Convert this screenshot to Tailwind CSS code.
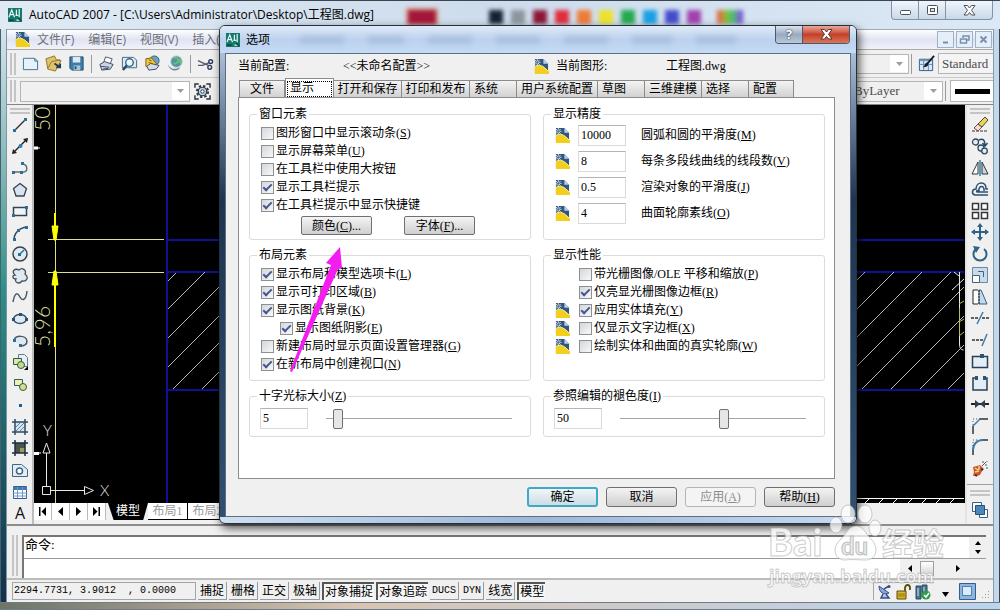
<!DOCTYPE html>
<html lang="zh-CN">
<head>
    <meta charset="UTF-8">
    <meta name="viewport" content="width=device-width, initial-scale=1.0">
    <title>AutoCAD 2007 - 选项</title>
    <!-- Tailwind CSS -->
    <script src="https://cdn.jsdelivr.net/npm/@tailwindcss/browser@4"></script>
    <style>
        body { font-family: 'Liberation Serif', 'Noto Sans CJK SC', serif; }
        .ui { font-family: 'Open Sans', 'Noto Sans CJK SC', sans-serif; }
        .mono { font-family: 'Liberation Mono', 'Noto Sans CJK SC', monospace; }
    </style>
</head>
<body class="h-screen overflow-hidden relative text-[12px] text-black">

    <!-- Símbolos compartilhados -->
    <svg class="hidden">
        <symbol id="dwg" viewBox="0 0 16 16">
            <path d="M1 0h9l5 5v10H1z" fill="#31567f"/>
            <path d="M10 0l5 5h-5z" fill="#b9d0e6"/>
            <path d="M1 8c4-3 9-1 15 5v3H1z" fill="#f3cf1d"/>
            <path d="M1 8c4-3 9-1 14 5" fill="none" stroke="#fff3a0"/>
            <path d="M3.500 0v7M0 3.500h7M1 1l5 5M6 1L1 6" stroke="#fff" stroke-width=".8"/>
            <path d="M3.500 2v3M2 3.500h3" stroke="#31567f" stroke-width=".8"/>
        </symbol>
        <symbol id="acad" viewBox="0 0 15 15">
            <path d="M0 0h15v15H0z" fill="#15786b"/>
            <path d="M1 10L4 2l3 8M2 7h4M9 2v6M12 1v9M8 8h3M9 13h4" stroke="#e4f7f2" stroke-width="1.300" fill="none"/>
            <path d="M1 13h5M11 11l3 3" stroke="#0a3b35" stroke-width="1.500"/>
        </symbol>
    </svg>

    <!-- Janela principal -->
    <div class="h-full flex flex-col border-t border-[#3c4450] bg-linear-to-r from-[#cfe0f2] via-[#d9e5f2] to-[#c5d9ee]">

        <header class="ui h-[28px] shrink-0 flex items-center pl-[8px] bg-linear-to-r from-[#dfeaf4] via-[#cddcec] to-[#dbe9f6]">
            <svg class="w-[14px] h-[14px]"><use href="#acad"/></svg>
            <h1 class="w-[384px] pl-[7px] text-[12px] whitespace-nowrap">AutoCAD 2007 - [C:\Users\Administrator\Desktop\工程图.dwg]</h1>
            <div class="flex items-center gap-[8px] pt-[3px] blur-[2px]">
                <span class="w-[32px] h-[18px] mr-[43px] bg-[#a3173a] border-2 border-[#dd9c7c]"></span>
                <span class="w-[14px] h-[14px] bg-[#152233]"></span>
                <span class="w-[14px] h-[14px] bg-[#8d959d]"></span>
                <span class="w-[14px] h-[14px] bg-[#8b1638]"></span>
                <span class="w-[14px] h-[14px] bg-[#e02c3c]"></span>
                <span class="w-[14px] h-[14px] bg-[#ee7b34]"></span>
                <span class="w-[14px] h-[14px] bg-[#ece229]"></span>
                <span class="w-[14px] h-[14px] bg-[#24a94f]"></span>
                <span class="w-[14px] h-[14px] bg-[#1a9fe3]"></span>
                <span class="w-[14px] h-[14px] bg-[#444bcb]"></span>
                <span class="w-[14px] h-[14px] bg-[#a142ae]"></span>
                <span class="w-[26px] h-[14px] ml-[8px] bg-linear-to-r from-[#e8503c] via-[#3fd045] to-[#7a30e0]"></span>
            </div>
            <div class="ml-auto mr-[7px] h-[19px] self-start flex rounded-b-[4px] border border-t-0 border-[#8593a5] bg-linear-to-b from-[#f0f6fc] to-[#c9d9ea]">
                <button class="w-[27px] grid place-content-center border-r border-[#8593a5]" aria-label="最小化">
                    <svg class="w-[13px] h-[11px]" viewBox="0 0 13 11"><rect x="1.500" y="5.500" width="10" height="4" rx="1" fill="#fff" stroke="#4b5159"/></svg>
                </button>
                <button class="w-[27px] grid place-content-center border-r border-[#8593a5]" aria-label="最大化">
                    <svg class="w-[13px] h-[11px]" viewBox="0 0 13 11"><rect x="1.500" y=".5" width="10" height="9" rx="1" fill="#fff" stroke="#4b5159"/><rect x="4.500" y="3.500" width="4" height="3" fill="#dde8f2" stroke="#4b5159"/></svg>
                </button>
                <button class="w-[46px] grid place-content-center" aria-label="关闭">
                    <svg class="w-[13px] h-[11px]" viewBox="0 0 13 11"><path d="M1 .5h3.500l2 2.500 2-2.500H12L8.500 5.300 12 10H8.500l-2-2.500-2 2.500H1l3.500-4.700z" fill="#fff" stroke="#4b5159"/></svg>
                </button>
            </div>
        </header>

        <div class="flex-1 min-h-0 flex">
            <div class="w-[7px] shrink-0 border-l border-r border-l-[#47606e] border-r-[#7f95a0] bg-linear-to-b from-[#d5e4f0] via-[#2b9288] via-45% to-[#15304a]"></div>

            <div class="flex-1 min-w-0 flex flex-col bg-[#f0f0f0]">

                <nav class="ui h-[20px] shrink-0 flex items-center pl-[8px] text-[12px] text-[#6d6f78] border-t border-[#9fa8b3] bg-linear-to-b from-white via-[#e0e4f2] to-[#f1f2fa]">
                    <svg class="w-[15px] h-[15px] mr-[7px]"><use href="#dwg"/></svg>
                    <div class="flex gap-[14px]">
                        <a href="#">文件(F)</a>
                        <a href="#">编辑(E)</a>
                        <a href="#">视图(V)</a>
                        <a href="#">插入(I)</a>
                    </div>
                    <div class="ml-auto flex gap-[2px] pr-px">
                        <button class="w-[17px] h-[17px] grid place-content-center border border-[#9db3ca] bg-[#e6eff8]" aria-label="最小化图形"><svg class="w-[11px] h-[11px]" viewBox="0 0 11 11"><path d="M3 8.500h5" stroke="#7890ad" stroke-width="2"/></svg></button>
                        <button class="w-[17px] h-[17px] grid place-content-center border border-[#9db3ca] bg-[#e6eff8]" aria-label="还原图形"><svg class="w-[11px] h-[11px]" viewBox="0 0 11 11"><path d="M4 4V2h6v4H8M1.500 5h6v4h-6z" fill="none" stroke="#7890ad" stroke-width="1.500"/></svg></button>
                        <button class="w-[17px] h-[17px] grid place-content-center border border-[#9db3ca] bg-[#e6eff8]" aria-label="关闭图形"><svg class="w-[11px] h-[11px]" viewBox="0 0 11 11"><path d="M2.500 2.500l6 6M8.500 2.500l-6 6" stroke="#7890ad" stroke-width="2"/></svg></button>
                    </div>
                </nav>

                <!-- Barra padrão -->
                <div class="h-[28px] shrink-0 flex items-center pl-[3px] border-t border-[#a9a9a9]">
                    <span class="w-[6px] h-[22px] mr-[6px] border-x-2 border-[#c4c4c4]"></span>
                    <svg class="w-[17px] h-[17px] mr-[6px]" viewBox="0 0 18 18"><path d="M1.500 3.500h12l3 3v9h-15z" fill="#e5f2fb" stroke="#3f7191"/><path d="M13.500 3.500v3h3" fill="none" stroke="#3f7191"/></svg>
                    <svg class="w-[17px] h-[17px] mr-[6px]" viewBox="0 0 18 18"><path d="M1 4l9-3 2 4 5 1-6 11-8-2z" fill="#dfc36a" stroke="#8f7431"/><path d="M3 14l4-7 9-2" fill="none" stroke="#8f7431"/><path d="M10 9l6 4M16 9v4h-4" stroke="#25394e" stroke-width="2" fill="none"/></svg>
                    <svg class="w-[17px] h-[17px] mr-[6px]" viewBox="0 0 18 18"><path d="M2 2h14v14H4l-2-2z" fill="#3e7ba8" stroke="#22506f"/><path d="M5 2h8v6H5z" fill="#d9eaf5"/><path d="M6 11h7v5H6z" fill="#a8c6da"/><path d="M8 12v3" stroke="#22506f" stroke-width="2"/></svg>
                    <span class="w-px h-[18px] mr-[6px] bg-[#9a9a9a]"></span>
                    <svg class="w-[17px] h-[17px] mr-[6px]" viewBox="0 0 18 18"><path d="M6 8l2-6 7 2-2 5" fill="#fff" stroke="#49546b"/><path d="M2 10l5-3 9 3-3 5-9 1z" fill="#ccd3e2" stroke="#39455f"/><path d="M3 12l9 1M5 15l6-1" stroke="#39455f"/></svg>
                    <svg class="w-[17px] h-[17px] mr-[6px]" viewBox="0 0 18 18"><path d="M1.500 2.500h12l3 3v8h-15z" fill="#dcecf6" stroke="#3d6888"/><circle cx="9" cy="8" r="4" fill="#f1f8fc" stroke="#3d6888" stroke-width="1.500"/><path d="M6 11l-4 5" stroke="#27455f" stroke-width="2.500"/></svg>
                    <svg class="w-[17px] h-[17px] mr-[6px]" viewBox="0 0 18 18"><circle cx="11" cy="6" r="5" fill="#6ba1bf" stroke="#325f7c"/><path d="M2 4l6-1 5 6-4 5-7-2z" fill="#f0c93a" stroke="#786019"/><path d="M3 12l4-3 9 2-3 4-8 1z" fill="#d6dbe6" stroke="#404a60"/><path d="M5 5l3 1M5 8l4 1" stroke="#786019"/></svg>
                    <svg class="w-[17px] h-[17px] mr-[6px]" viewBox="0 0 18 18"><circle cx="10" cy="7" r="6" fill="#4f94a8" stroke="#b6c8ce"/><path d="M7 3c3 0 5 0 5 3s-4 2-5 4M14 4c-1 3 0 4 1 5" stroke="#6dbd7a" stroke-width="2" fill="none"/><path d="M1 10c3 5 7 6 13 3-2 5-11 5-13-3z" fill="#7b858d"/></svg>
                    <span class="w-px h-[18px] mr-[6px] bg-[#9a9a9a]"></span>
                    <svg class="w-[17px] h-[17px]" viewBox="0 0 18 18"><path d="M1 6l11 5M1 11h5l7-3" stroke="#545b6d" stroke-width="1.500" fill="none"/><circle cx="14.500" cy="7" r="2" fill="none" stroke="#2e3a62" stroke-width="1.500"/><circle cx="13.500" cy="13" r="2" fill="none" stroke="#2e3a62" stroke-width="1.500"/></svg>
                    <div class="ml-auto flex items-center">
                        <button class="w-[100px] h-[20px] flex items-center justify-end border border-[#b5b5b5] bg-[#f0f0f0]" aria-label="标注样式列表"><span class="w-[18px] h-[17px] grid place-content-center bg-white"><svg class="w-[7px] h-[4px]" viewBox="0 0 7 4"><path d="M0 0h7L3.500 4z" fill="#9d9d9d"/></svg></span></button>
                        <span class="w-[3px] h-[20px] mr-[3px] border-r border-[#9a9a9a]"></span>
                        <svg class="w-[17px] h-[17px] mx-[3px]" viewBox="0 0 18 18"><path d="M1.500 4.500h14v12h-14z" fill="#dbe9f6" stroke="#31598b"/><path d="M1 6h14M1 10h14M6 5v11M11 5v11" stroke="#5f87bd"/><path d="M17 1l-7 8" stroke="#1c1c28" stroke-width="2"/><path d="M10 8c-3 0-2 3-5 5 4 0 6-1 6-4z" fill="#1c1c28"/></svg>
                        <button class="w-[55px] h-[21px] pl-[3px] text-left text-[13px] leading-[17px] text-[#4c4c4c] border border-r-0 border-[#b5b5b5] bg-[#f4f4f4]">Standard</button>
                    </div>
                </div>

                <!-- Barra de propriedades -->
                <div class="h-[27px] shrink-0 flex items-center pl-[3px] border-t border-[#c9c9c9]">
                    <span class="w-[6px] h-[22px] mr-[4px] border-x-2 border-[#c4c4c4]"></span>
                    <button class="w-[170px] h-[21px] flex items-center justify-end border border-[#b5b5b5] bg-[#f0f0f0]" aria-label="工作空间"><span class="w-[17px] h-[18px] grid place-content-center bg-white"><svg class="w-[7px] h-[4px]" viewBox="0 0 7 4"><path d="M0 0h7L3.500 4z" fill="#9d9d9d"/></svg></span></button>
                    <svg class="w-[17px] h-[17px] ml-[4px]" viewBox="0 0 18 18"><path d="M1 5V1h4M13 1h4v4M17 13v4h-4M5 17H1v-4" fill="none" stroke="#28323c" stroke-width="1.500"/><circle cx="9" cy="9" r="6" fill="none" stroke="#2a3945" stroke-width="2" stroke-dasharray="2.500 2.200"/><circle cx="9" cy="9" r="4.500" fill="#c3d2df" stroke="#2a3945" stroke-width="1.300"/><circle cx="9" cy="9" r="1.800" fill="#fff" stroke="#2a3945"/></svg>
                    <div class="ml-auto flex items-center">
                        <button class="w-[100px] h-[21px] pl-[10px] flex items-center justify-between text-[13px] text-[#4c4c4c] border border-[#b5b5b5] bg-[#f0f0f0]">ByLayer<span class="w-[18px] h-[18px] grid place-content-center bg-white"><svg class="w-[7px] h-[4px]" viewBox="0 0 7 4"><path d="M0 0h7L3.500 4z" fill="#9d9d9d"/></svg></span></button>
                        <span class="w-[3px] h-[20px] mr-[4px] border-r border-[#9a9a9a]"></span>
                        <button class="w-[43px] h-[22px] flex items-center pl-[4px] pr-[3px] border border-r-0 border-[#b5b5b5] bg-white" aria-label="线宽"><span class="flex-1 h-[5px] bg-black"></span></button>
                    </div>
                </div>

                <div class="flex-1 min-h-0 flex border-t border-[#848484]">

                    <!-- Ferramentas de desenho -->
                    <aside class="w-[27px] shrink-0 flex flex-col items-center pt-[3px] border-r-2 border-[#bdbdbd]">
                        <span class="w-[20px] h-[6px] shrink-0 border-y-2 border-[#c4c4c4]"></span>
                        <div class="flex-1 flex flex-col justify-around">
                            <svg class="w-[18px] h-[18px]" viewBox="0 0 18 18"><path d="M3 15L15 3" stroke="#333" stroke-width="1.500"/><path d="M2 13h3v3H2zM13 2h3v3h-3z" fill="#2a6f9c"/></svg>
                            <svg class="w-[18px] h-[18px]" viewBox="0 0 18 18"><path d="M2 16L16 2" stroke="#222" stroke-width="1.500"/><path d="M1 17l1-5 4 4zM17 1l-5 1 4 4z" fill="#222"/><circle cx="9.500" cy="9" r="2" fill="#2a7fb0"/></svg>
                            <svg class="w-[18px] h-[18px]" viewBox="0 0 18 18"><path d="M3 13h9c5 0 5-7 0-8" fill="none" stroke="#5c6c78" stroke-width="1.500"/><path d="M1 12h3v3H1zM9 12h3v3H9zM10 3h3v3h-3z" fill="#2a6f9c"/></svg>
                            <svg class="w-[18px] h-[18px]" viewBox="0 0 18 18"><path d="M9 2.500l6.500 5-2.500 7.500H5L2.500 7.500z" fill="#d5e4f0" stroke="#38434d" stroke-width="1.300"/></svg>
                            <svg class="w-[18px] h-[18px]" viewBox="0 0 18 18"><path d="M2.500 5.500h13v8h-13z" fill="#eef4f8" stroke="#38434d" stroke-width="1.500"/><path d="M1 12h3v3H1zM14 4h3v3h-3z" fill="#2a6f9c"/></svg>
                            <svg class="w-[18px] h-[18px]" viewBox="0 0 18 18"><path d="M3 16C3 9 8 4 16 3" fill="none" stroke="#38434d" stroke-width="1.500"/><path d="M2 14h3v3H2zM6 5h3v3H6zM14 2h3v3h-3z" fill="#2a6f9c"/></svg>
                            <svg class="w-[18px] h-[18px]" viewBox="0 0 18 18"><circle cx="9" cy="9" r="7" fill="#dfeaf3" stroke="#38434d" stroke-width="1.500"/><path d="M8 10l5-5" stroke="#2a6f9c" stroke-width="1.500"/><path d="M7 8h3v3H7z" fill="#2a6f9c"/></svg>
                            <svg class="w-[18px] h-[18px]" viewBox="0 0 18 18"><path d="M4 8C0 4 4 1 8 3c3-3 8 0 6 4 4 3 2 8-3 7-3 4-8 1-6-2-4 0-4-4-1-4z" fill="#dfe9f2" stroke="#444f5a" stroke-width="1.300"/></svg>
                            <svg class="w-[18px] h-[18px]" viewBox="0 0 18 18"><path d="M2 14C4 3 7 5 9 9s6 4 7-6" fill="none" stroke="#4c5a66" stroke-width="1.500"/></svg>
                            <svg class="w-[18px] h-[18px]" viewBox="0 0 18 18"><ellipse cx="9" cy="9" rx="6.500" ry="4.500" fill="#dfe9f2" stroke="#38536b" stroke-width="1.500"/><path d="M1 8h3v3H1zM14 8h3v3h-3zM8 3h3v3H8z" fill="#2a4f6c"/></svg>
                            <svg class="w-[18px] h-[18px]" viewBox="0 0 18 18"><path d="M3 8c2-5 12-5 13 1 0 4-4 5-7 5" fill="#dfe9f2" stroke="#46596b" stroke-width="1.500"/><path d="M2 7h3v3H2zM8 12h3v3H8z" fill="#2a6f9c"/></svg>
                            <svg class="w-[18px] h-[18px]" viewBox="0 0 18 18"><path d="M7.500 1.500h6l3 3v9h-9z" fill="#e4eff6" stroke="#5c7f96"/><path d="M2.500 5.500h8v6h-8z" fill="#dfe7a8" stroke="#2f5d42"/><circle cx="10" cy="12" r="3.500" fill="#c6d78f" stroke="#2f5d42"/><path d="M17 13v4h-4z"/></svg>
                            <svg class="w-[18px] h-[18px]" viewBox="0 0 18 18"><path d="M3.500 4.500h8v6h-8z" fill="#eef1b0" stroke="#2f5d6a"/><circle cx="12" cy="12" r="3.500" fill="#d7dd94" stroke="#2f5d42"/></svg>
                            <svg class="w-[18px] h-[18px]" viewBox="0 0 18 18"><path d="M8 8h3v3H8z" fill="#1d5f94"/></svg>
                            <svg class="w-[18px] h-[18px]" viewBox="0 0 18 18"><path d="M4 4h10v10H4z" fill="#d9e6f0"/><path d="M5 9l4-4M5 13l8-8M9 13l4-4" stroke="#5c82a0"/><path d="M1 4h16M1 14h16M4 1v16M14 1v16" stroke="#2d4a63" stroke-width="1.500"/></svg>
                            <svg class="w-[18px] h-[18px]" viewBox="0 0 18 18"><path d="M4 4h10v10H4z" fill="#4a554c"/><path d="M9 9h5v5H9z" fill="#a09a62"/><path d="M1 4h16M1 14h16M4 1v16M14 1v16" stroke="#1c2d3e" stroke-width="1.500"/></svg>
                            <svg class="w-[18px] h-[18px]" viewBox="0 0 18 18"><path d="M1.500 3.500h9l6 5v7h-15z" fill="#e2edf6" stroke="#3d6888"/><circle cx="8.500" cy="10" r="3" fill="#fff" stroke="#3d6888" stroke-width="1.500"/></svg>
                            <svg class="w-[18px] h-[18px]" viewBox="0 0 18 18"><path d="M2.500 3.500h13v12h-13z" fill="#fff" stroke="#2f5f94"/><path d="M2 4h14v3H2z" fill="#4479ad"/><path d="M2 10h14M2 13h14M6.500 4v11M11.500 4v11" stroke="#6f9ac4"/></svg>
                            <svg class="w-[18px] h-[18px] overflow-visible" viewBox="0 0 18 18"><text x="9" y="15" text-anchor="middle" font-size="16" font-family="Open Sans, sans-serif" fill="#111">A</text></svg>
                        </div>
                    </aside>

                    <div class="flex-1 min-w-0 flex flex-col">
                        <!-- Área de desenho -->
                        <div class="flex-1 min-h-0 bg-black">
                            <svg class="w-full h-full overflow-visible" viewBox="35 105 930 398" preserveAspectRatio="xMinYMin meet" fill="none">
                                <g stroke="#101096" stroke-width="2">
                                    <path d="M168 105V503M168 240H965M168 272H965M168 390H965"/>
                                </g>
                                <g stroke="#b9b9b9">
                                    <path d="M169 281l8-8M169 309l37-37M169 338l66-66M169 367l95-95M174 389l117-117M203 389l117-117"/>
                                    <path d="M749 389l117-117M778 389l117-117M806 389l117-117M835 389l117-117M863 389l102-102M892 389l73-73M921 389l44-44M949 389l16-16"/>
                                    <path d="M858 498.500H965M866 503l4-4M880 503l4-4M894 503l4-4M909 503l4-4M923 503l4-4M937 503l4-4M951 503l4-4" stroke="#fff"/>
                                    <path d="M960.500 272v72q0 6 4 6M955 272l5 4M965 279l-12 11" stroke="#e8e8e8"/>
                                    <path d="M960.500 308v28M960 304l5-3M960 322l5-3M960 336l5-4" stroke="#bdbd55"/>
                                </g>
                                <g stroke="#dede8a">
                                    <path d="M56.500 105V503M49 239.500H165M49 272.500H165"/>
                                    <path d="M56 213v26M56 272v75" stroke="#ffff00" stroke-width="2"/>
                                    <path d="M53 226h6l-2 14h-2zM53 285h6l-2-14h-2z" fill="#ffff00" stroke="#ffff00" stroke-width="1"/>
                                </g>
                                <g fill="#dede9a" font-family="Lato, sans-serif" font-weight="300" font-size="21">
                                    <text transform="translate(51 131) rotate(-90)">50</text>
                                    <text transform="translate(51 347) rotate(-90)">5,96</text>
                                </g>
                                <path d="M35 148h4M35 453.500h5" stroke="#fff" stroke-width="3"/>
                                <path d="M38 148h3M39 453h3" stroke="#fff"/>
                                <g stroke="#e8e8e8">
                                    <path d="M43.500 486.500h8v8h-8zM47.500 486v-33M52 490.500h33M44 453l3.500-10 3.500 10zM85.500 486.500l9 4-9 4z"/>
                                </g>
                                <g fill="#e0e0e0" font-family="Lato, sans-serif" font-weight="300" font-size="15">
                                    <text x="101" y="496">X</text>
                                    <text x="44" y="436">Y</text>
                                </g>
                            </svg>
                        </div>
                        <!-- Abas de layout -->
                        <div class="h-[17px] shrink-0 flex text-[12px] leading-[15px]">
                            <button class="w-[18px] grid place-content-center border-r border-[#bbb] bg-white" aria-label="第一个"><svg class="w-[9px] h-[9px]" viewBox="0 0 9 9"><path d="M1 0h1.500v9H1zM8 0v9L3.500 4.500z"/></svg></button>
                            <button class="w-[18px] grid place-content-center border-r border-[#bbb] bg-white" aria-label="上一个"><svg class="w-[9px] h-[9px]" viewBox="0 0 9 9"><path d="M7 0v9L2 4.500z"/></svg></button>
                            <button class="w-[18px] grid place-content-center border-r border-[#bbb] bg-white" aria-label="下一个"><svg class="w-[9px] h-[9px]" viewBox="0 0 9 9"><path d="M2 0v9l5-4.500z"/></svg></button>
                            <button class="w-[18px] grid place-content-center border-r border-[#bbb] bg-white" aria-label="最后一个"><svg class="w-[9px] h-[9px]" viewBox="0 0 9 9"><path d="M6.500 0H8v9H6.500zM1 0v9l4.500-4.500z"/></svg></button>
                            <button class="w-[40px] ml-[2px] text-center text-white bg-black [clip-path:polygon(0_0,100%_0,88%_100%,14%_100%)]">模型</button>
                            <button class="w-[40px] text-center text-[#9a9a9a] bg-white border-b border-r border-black">布局1</button>
                            <button class="w-[40px] text-center text-[#9a9a9a] bg-white border-b border-r border-black">布局2</button>
                        </div>
                        <div class="h-[4px] shrink-0"></div>
                    </div>

                    <!-- Ferramentas de modificação -->
                    <aside class="w-[28px] shrink-0 flex flex-col items-center pt-[3px] border-l-2 border-[#e4e4e4]">
                        <span class="w-[20px] h-[6px] shrink-0 border-y-2 border-[#c4c4c4]"></span>
                        <div class="flex-1 flex flex-col justify-around">
                            <svg class="w-[18px] h-[18px]" viewBox="0 0 18 18"><path d="M1 15h16" stroke="#333" stroke-dasharray="3 1"/><path d="M3 12l4-4 4 3-4 4z" fill="#f4dcd5" stroke="#7d4a42"/><path d="M7 8l7-7 3 3-6 7z" fill="#e6d35a" stroke="#4b4a36"/></svg>
                            <svg class="w-[18px] h-[18px]" viewBox="0 0 18 18"><g fill="#e2edf6" stroke="#33465a" stroke-width="1.300"><circle cx="4.500" cy="5" r="3"/><circle cx="10" cy="11" r="3"/><circle cx="13.500" cy="14" r="2.800"/></g><path d="M8 3c4-2 6 0 6 5M11.500 6l2.500 3 2.500-3" fill="none" stroke="#234a70" stroke-width="1.500"/></svg>
                            <svg class="w-[18px] h-[18px]" viewBox="0 0 18 18"><path d="M7 3v12H1z" fill="#fff" stroke="#333"/><path d="M11 3v12h6z" fill="#c4d9ea" stroke="#333"/><path d="M9 1v16" stroke="#2a7fa5" stroke-width="1.500"/></svg>
                            <svg class="w-[18px] h-[18px]" viewBox="0 0 18 18"><path d="M17 15H4c-4-1-3-6 1-6 0-8 11-8 10 0h2M17 12H6c-1-1 0-2 2-1-1-6 6-6 5 0" fill="none" stroke="#2b5172" stroke-width="1.500"/></svg>
                            <svg class="w-[18px] h-[18px]" viewBox="0 0 18 18"><path d="M1.500 1.500h6v6h-6zM10.500 1.500h6v6h-6zM1.500 10.500h6v6h-6zM10.500 10.500h6v6h-6z" fill="#fff" stroke="#33383d" stroke-width="1.500"/></svg>
                            <svg class="w-[18px] h-[18px]" viewBox="0 0 18 18"><path d="M9 3v12M3 9h12" stroke="#2f6288" stroke-width="2"/><path d="M9 0l3 4H6zM9 18l3-4H6zM0 9l4-3v6zM18 9l-4-3v6z" fill="#2f6288"/></svg>
                            <svg class="w-[18px] h-[18px]" viewBox="0 0 18 18"><path d="M5 4a6.500 6.500 0 1 0 8 0" fill="none" stroke="#2f6288" stroke-width="2"/><path d="M2 1l7 1-4 6z" fill="#2f6288"/></svg>
                            <svg class="w-[18px] h-[18px]" viewBox="0 0 18 18"><path d="M1.500 1.500h15v15h-15z" fill="#c9dceb" stroke="#6b8aa3"/><path d="M1.500 9.500h7v7h-7z" fill="#fff" stroke="#4a6279"/><path d="M7 5.500h5.500V11" fill="none" stroke="#4a6279"/></svg>
                            <svg class="w-[18px] h-[18px]" viewBox="0 0 18 18"><path d="M7 2H2v14h5" fill="#fff" stroke="#222"/><path d="M8 2h2l6 14H8z" fill="#c4d9ea" stroke="#2f6288"/><path d="M8 2v14" stroke="#222" stroke-dasharray="2 1"/></svg>
                            <svg class="w-[18px] h-[18px]" viewBox="0 0 18 18"><path d="M0 9h7M11 9h7" stroke="#333" stroke-width="1.500" stroke-dasharray="3 1"/><path d="M6 15l6-12" stroke="#3b7db0" stroke-width="1.500"/></svg>
                            <svg class="w-[18px] h-[18px]" viewBox="0 0 18 18"><path d="M1 9h11" stroke="#333" stroke-width="1.500" stroke-dasharray="3 1"/><path d="M11 15l5-12" stroke="#3b7db0" stroke-width="1.500"/></svg>
                            <svg class="w-[18px] h-[18px]" viewBox="0 0 18 18"><path d="M1.500 4.500h15v11h-15z" fill="#e2edf6" stroke="#2c3f52" stroke-width="1.500"/><path d="M9 2h4v4H9z" fill="#2c5573"/></svg>
                            <svg class="w-[18px] h-[18px]" viewBox="0 0 18 18"><path d="M5 4H2v12h14V4h-3" fill="#e2edf6" stroke="#2c3f52" stroke-width="1.500"/><path d="M4 2h3v4H4zM12 2h3v4h-3z" fill="#2c5573"/></svg>
                            <svg class="w-[18px] h-[18px]" viewBox="0 0 18 18"><path d="M0 9h18" stroke="#222" stroke-width="2"/><path d="M4 5l5 4-5 4zM14 5L9 9l5 4z" fill="#2c3f52"/></svg>
                            <svg class="w-[18px] h-[18px]" viewBox="0 0 18 18"><path d="M8 2h9M2 9v8" stroke="#333" stroke-width="1.500"/><path d="M2 9l7-7" stroke="#3b7db0" stroke-width="1.500"/><path d="M2 8V2h6" stroke="#555" stroke-dasharray="1 2" fill="none"/></svg>
                            <svg class="w-[18px] h-[18px]" viewBox="0 0 18 18"><path d="M10 2h7M2 10v7" stroke="#333" stroke-width="1.500"/><path d="M2 12C2 6 6 2 12 2" stroke="#3b7db0" stroke-width="2" fill="none"/><path d="M2 8V2h6" stroke="#555" stroke-dasharray="1 2" fill="none"/></svg>
                            <svg class="w-[18px] h-[18px]" viewBox="0 0 18 18"><path d="M2 7l4-1 3-1 2 2 2 2-2 2-2 4-3 1-4 0 1-4z" fill="#c9552b"/><path d="M4 8l3 2M8 6v4M4 12l4-1" stroke="#f2d18d" stroke-width="1.500"/><path d="M4 15l2 1M10 9l2 1" stroke="#4a2415" stroke-width="1.500"/><path d="M11 6l4-4M12 1v2M16 5h-2M15 8h2M16 1v1" stroke="#46566b"/></svg>
                        </div>
                        <span class="w-full h-[5px] shrink-0 border-b border-[#a0a0a0]"></span>
                        <span class="w-[20px] h-[6px] mt-[5px] shrink-0 border-y-2 border-[#c4c4c4]"></span>
                        <svg class="w-[18px] h-[18px] my-[5px] shrink-0" viewBox="0 0 18 18"><path d="M1.500 1.500h9v9h-9zM8.500 8.500h8v8h-8z" fill="#fff" stroke="#33608a"/><path d="M4.500 4.500h9v9h-9z" fill="#4d86b8" stroke="#24507c"/></svg>
                    </aside>
                </div>

                <!-- Linha de comando -->
                <section class="h-[54px] shrink-0 flex pl-[5px] pr-[7px] pt-[9px] border-t-2 border-[#8d8d8d]">
                    <span class="w-[6px] h-[41px] mr-[4px] border-x-2 border-[#c4c4c4]"></span>
                    <div class="flex-1 flex flex-col border-t-2 border-l-2 border-[#767676]">
                        <div class="h-[22px] shrink-0 flex bg-white border-b border-[#9a9a9a]">
                            <label for="cmd" class="pl-px text-[13px] leading-[15px]">命令:</label>
                            <input id="cmd" type="text" class="flex-1 min-w-0 pl-[4px] outline-none">
                            <div class="w-[17px] flex flex-col items-center justify-between py-[4px] bg-[#f0f0f0]">
                                <svg class="w-[6px] h-[4px]" viewBox="0 0 6 4"><path d="M0 4h6L3 0z"/></svg>
                                <svg class="w-[6px] h-[4px]" viewBox="0 0 6 4"><path d="M0 0h6L3 4z"/></svg>
                            </div>
                        </div>
                        <div class="flex-1 flex bg-white">
                            <div class="w-[86px] ml-auto pl-[8px] flex items-center bg-[#f0f0f0]">
                                <svg class="w-[4px] h-[7px]" viewBox="0 0 4 7"><path d="M4 0v7L0 3.500z"/></svg>
                                <span class="w-[14px] h-[15px] ml-[8px] border border-[#a0a0a0] bg-linear-to-b from-white to-[#d5d5d5]"></span>
                                <svg class="w-[4px] h-[7px] ml-[22px]" viewBox="0 0 4 7"><path d="M0 0v7l4-3.500z"/></svg>
                            </div>
                        </div>
                    </div>
                </section>

                <!-- Barra de status -->
                <footer class="h-[24px] shrink-0 flex items-center gap-[2px] pl-[5px] pr-[3px] border-t-2 border-[#bcbcbc] leading-[16px]">
                    <output class="mono w-[184px] h-[18px] pl-px text-[10px] whitespace-pre border border-[#a5a5a5]">2294.7731, 3.9012  , 0.0000</output>
                    <button class="h-[18px] px-[2px] border-r border-b border-[#9a9a9a]">捕捉</button>
                    <button class="h-[18px] px-[2px] border-r border-b border-[#9a9a9a]">栅格</button>
                    <button class="h-[18px] px-[2px] border-r border-b border-[#9a9a9a]">正交</button>
                    <button class="h-[18px] px-[2px] border-r border-b border-[#9a9a9a]">极轴</button>
                    <button class="h-[18px] px-px border-l-2 border-t-2 border-[#555] bg-[#f6f6f6]">对象捕捉</button>
                    <button class="h-[18px] px-px border-l-2 border-t-2 border-[#555] bg-[#f6f6f6]">对象追踪</button>
                    <button class="mono h-[18px] px-[2px] text-[10px] border-r border-b border-[#9a9a9a]">DUCS</button>
                    <button class="mono h-[18px] px-[2px] text-[10px] border-r border-b border-[#9a9a9a]">DYN</button>
                    <button class="h-[18px] px-[2px] border-r border-b border-[#9a9a9a]">线宽</button>
                    <button class="h-[18px] px-px border-l-2 border-t-2 border-[#555] bg-[#f6f6f6]">模型</button>
                    <div class="ml-auto h-[18px] flex items-center gap-[3px] px-[3px] border-l border-t border-[#a5a5a5]">
                        <svg class="w-[16px] h-[16px]" viewBox="0 0 16 16"><path d="M2 2c0 7 5 9 10 7z" fill="#8fa6d4" stroke="#33508f"/><path d="M7 5l5-3M6 10l-2 4h8l-3-4" stroke="#33508f" stroke-width="1.500" fill="#b8c6e4"/><circle cx="12" cy="2.500" r="1.500" fill="#33508f"/></svg>
                        <svg class="w-[16px] h-[16px]" viewBox="0 0 16 16"><path d="M1 7h9v8H1z" fill="#d9b82c" stroke="#5c4a08"/><path d="M9 7V4c0-4 5-4 5 0v2" fill="none" stroke="#5c4a08" stroke-width="1.800"/><path d="M2 10h7M2 12h7" stroke="#8c7312"/></svg>
                        <svg class="w-[16px] h-[16px]" viewBox="0 0 16 16"><path d="M1 2h5v13H1zM7 1h5v12H7z" fill="#46758d" stroke="#274a5e"/><path d="M3 4v8M9 3v6" stroke="#d8e9f2"/><circle cx="11" cy="11" r="4.500" fill="#2f9e4a"/><path d="M9 11l2 2 3-4" stroke="#fff" stroke-width="1.500" fill="none"/></svg>
                    </div>
                    <svg class="w-[7px] h-[5px] ml-[6px] mt-[6px]" viewBox="0 0 7 5"><path d="M0 0h7L3.500 5z"/></svg>
                    <svg class="w-[17px] h-[17px] ml-[8px]" viewBox="0 0 17 17"><path d="M.5.5h16v16H.5z" fill="#8fb4dc" stroke="#2f5e93"/><path d="M3.500 3.500h9v9h-9z" fill="#dceafa" stroke="#4f7fb8"/></svg>
                    <svg class="w-[9px] h-[9px] ml-[3px] mt-[7px]" viewBox="0 0 9 9"><path d="M7 1h1v1H7zM4 4h1v1H4zM7 4h1v1H7zM1 7h1v1H1zM4 7h1v1H4zM7 7h1v1H7z" fill="#a0a0a0"/></svg>
                </footer>
            </div>

            <div class="w-[7px] shrink-0 border-l border-r border-l-[#8b9aaa] border-r-[#3c4450] bg-[#c3d8ee]"></div>
        </div>
        <div class="h-[8px] shrink-0 border-y border-[#707c86] bg-linear-to-r from-[#6d7468] via-[#d7c3b0] via-35% to-[#bcd4ee]"></div>
    </div>

    <!-- Janela Opções -->
    <div role="dialog" aria-labelledby="dlg-title" class="absolute left-[219px] top-[25px] w-[638px] flex flex-col rounded-[6px] border border-[#26303c] bg-linear-to-b from-[#c9dcf3] via-[#1d3550] via-35% to-[#31506f] shadow-[2px_4px_10px_rgba(0,0,0,0.7)]">
        <div class="ui h-[27px] flex items-center pl-[6px] rounded-t-[5px] bg-linear-to-b from-[#dfeaf8] via-[#bcd2ee] to-[#c5daf3]">
            <svg class="w-[14px] h-[14px]"><use href="#acad"/></svg>
            <h2 id="dlg-title" class="pl-[6px] text-[12px]">选项</h2>
            <div class="flex-1 h-[6px] mx-[30px] flex gap-[24px] blur-[3px]">
                <span class="w-[44px] bg-[#a3bbd8]"></span>
                <span class="w-[36px] bg-[#a3bbd8]"></span>
                <span class="w-[44px] bg-[#a3bbd8]"></span>
                <span class="w-[44px] bg-[#a3bbd8]"></span>
                <span class="w-[44px] bg-[#a3bbd8]"></span>
                <span class="w-[40px] bg-[#a3bbd8]"></span>
                <span class="w-[40px] bg-[#a3bbd8]"></span>
            </div>
            <div class="self-start mr-[6px] h-[18px] flex rounded-b-[4px] border border-t-0 border-[#4c5967] overflow-hidden">
                <button class="w-[27px] text-[12px] leading-[16px] font-bold text-white bg-linear-to-b from-[#dbe4ef] via-[#9aabc0] to-[#b9c9dc] border-r border-[#4c5967] text-shadow-[0_0_2px_#000]">?</button>
                <button class="w-[46px] grid place-content-center bg-linear-to-b from-[#e9a79b] via-[#c4402b] to-[#d9765a]" aria-label="关闭">
                    <svg class="w-[13px] h-[11px]" viewBox="0 0 13 11"><path d="M1 .5h3.500l2 2.500 2-2.500H12L8.500 5.300 12 10H8.500l-2-2.500-2 2.500H1l3.500-4.700z" fill="#fff" stroke="#5b3430"/></svg>
                </button>
            </div>
        </div>

        <div class="mx-[5px] pl-[12px] pr-[15px] pt-[3px] pb-[9px] bg-[#f0f0f0] border border-[#5d6f82]">
            <div class="h-[18px] flex items-center">
                <span class="w-[105px]">当前配置:</span>
                <span class="w-[191px]">&lt;&lt;未命名配置&gt;&gt;</span>
                <svg class="w-[15px] h-[15px] mr-[7px]"><use href="#dwg"/></svg>
                <span class="w-[110px]">当前图形:</span>
                <span>工程图.dwg</span>
            </div>

            <div role="tablist" class="flex items-end mt-[3px] pl-px">
                <button role="tab" class="w-[46px] h-[17px] leading-[15px] border border-b-0 border-[#8c8c8c] bg-linear-to-b from-[#f3f3f3] to-[#d2d2d2]">文件</button>
                <button role="tab" aria-selected="true" class="w-[49px] h-[19px] pt-px px-px border border-b-0 border-[#8c8c8c] bg-white"><span class="block h-[16px] pl-[2px] text-left leading-[13px] border border-dotted border-black">显示</span></button>
                <button role="tab" class="w-[68px] h-[17px] leading-[15px] border border-l-0 border-b-0 border-[#8c8c8c] bg-linear-to-b from-[#f3f3f3] to-[#d2d2d2]">打开和保存</button>
                <button role="tab" class="w-[68px] h-[17px] leading-[15px] border border-l-0 border-b-0 border-[#8c8c8c] bg-linear-to-b from-[#f3f3f3] to-[#d2d2d2]">打印和发布</button>
                <button role="tab" class="w-[47px] h-[17px] pl-[4px] text-left leading-[15px] border border-l-0 border-b-0 border-[#8c8c8c] bg-linear-to-b from-[#f3f3f3] to-[#d2d2d2]">系统</button>
                <button role="tab" class="w-[81px] h-[17px] leading-[15px] border border-l-0 border-b-0 border-[#8c8c8c] bg-linear-to-b from-[#f3f3f3] to-[#d2d2d2]">用户系统配置</button>
                <button role="tab" class="w-[47px] h-[17px] pl-[4px] text-left leading-[15px] border border-l-0 border-b-0 border-[#8c8c8c] bg-linear-to-b from-[#f3f3f3] to-[#d2d2d2]">草图</button>
                <button role="tab" class="w-[57px] h-[17px] leading-[15px] border border-l-0 border-b-0 border-[#8c8c8c] bg-linear-to-b from-[#f3f3f3] to-[#d2d2d2]">三维建模</button>
                <button role="tab" class="w-[47px] h-[17px] pl-[4px] text-left leading-[15px] border border-l-0 border-b-0 border-[#8c8c8c] bg-linear-to-b from-[#f3f3f3] to-[#d2d2d2]">选择</button>
                <button role="tab" class="w-[45px] h-[17px] pl-[4px] text-left leading-[15px] border border-l-0 border-b-0 border-[#8c8c8c] bg-linear-to-b from-[#f3f3f3] to-[#d2d2d2]">配置</button>
            </div>

            <div role="tabpanel" class="grid grid-cols-2 gap-x-[12px] gap-y-[7px] pl-[10px] pr-[9px] pt-[8px] pb-[41px] bg-white border border-[#8c8c8c]">

                <fieldset class="h-[134px] pl-[11px] border border-[#dcdcdc] rounded-[3px]">
                    <legend class="-ml-[4px] px-[2px] leading-[16px]">窗口元素</legend>
                    <div id="window-elements" class="pt-[2px]"></div>
                    <div class="flex gap-[32px] pl-[40px] pt-[2px]">
                        <button class="w-[71px] h-[19px] leading-[16px] rounded-[2px] border border-[#707070] bg-linear-to-b from-[#f4f4f4] to-[#cfcfcf]">颜色(<u>C</u>)...</button>
                        <button class="w-[71px] h-[19px] leading-[16px] rounded-[2px] border border-[#707070] bg-linear-to-b from-[#f4f4f4] to-[#cfcfcf]">字体(<u>F</u>)...</button>
                    </div>
                </fieldset>

                <fieldset class="h-[134px] pl-[11px] border border-[#dcdcdc] rounded-[3px]">
                    <legend class="-ml-[4px] px-[2px] leading-[16px]">显示精度</legend>
                    <div id="resolution"></div>
                </fieldset>

                <fieldset class="h-[134px] pl-[11px] border border-[#dcdcdc] rounded-[3px]">
                    <legend class="-ml-[4px] px-[2px] leading-[16px]">布局元素</legend>
                    <div id="layout-elements" class="pt-[2px]"></div>
                </fieldset>

                <fieldset class="h-[134px] pl-[11px] border border-[#dcdcdc] rounded-[3px]">
                    <legend class="-ml-[4px] px-[2px] leading-[16px]">显示性能</legend>
                    <div id="performance" class="pt-[2px]"></div>
                </fieldset>

                <fieldset class="h-[49px] pl-[10px] border border-[#dcdcdc] rounded-[3px]">
                    <legend class="-ml-[3px] px-[2px] leading-[16px]"><label for="cursor-size">十字光标大小(<u>Z</u>)</label></legend>
                    <div class="flex items-center pt-[4px]">
                        <input id="cursor-size" type="text" value="5" class="w-[48px] h-[21px] pl-[2px] border border-[#dadada] border-t-[#b4b4b4]">
                        <input type="range" value="4" aria-label="十字光标大小" class="w-[186px] h-[21px] ml-[18px] appearance-none bg-transparent [&::-webkit-slider-runnable-track]:h-[2px] [&::-webkit-slider-runnable-track]:border-t [&::-webkit-slider-runnable-track]:border-[#a5a5a5] [&::-webkit-slider-thumb]:appearance-none [&::-webkit-slider-thumb]:w-[10px] [&::-webkit-slider-thumb]:h-[20px] [&::-webkit-slider-thumb]:-mt-[10px] [&::-webkit-slider-thumb]:rounded-[2px] [&::-webkit-slider-thumb]:border [&::-webkit-slider-thumb]:border-[#707070] [&::-webkit-slider-thumb]:bg-[#e6e6e6]">
                    </div>
                </fieldset>

                <fieldset class="h-[49px] pl-[10px] border border-[#dcdcdc] rounded-[3px]">
                    <legend class="-ml-[3px] px-[2px] leading-[16px]"><label for="fade">参照编辑的褪色度(<u>I</u>)</label></legend>
                    <div class="flex items-center pt-[4px]">
                        <input id="fade" type="text" value="50" class="w-[48px] h-[21px] pl-[2px] border border-[#dadada] border-t-[#b4b4b4]">
                        <input type="range" value="56" aria-label="褪色度" class="w-[186px] h-[21px] ml-[18px] appearance-none bg-transparent [&::-webkit-slider-runnable-track]:h-[2px] [&::-webkit-slider-runnable-track]:border-t [&::-webkit-slider-runnable-track]:border-[#a5a5a5] [&::-webkit-slider-thumb]:appearance-none [&::-webkit-slider-thumb]:w-[10px] [&::-webkit-slider-thumb]:h-[20px] [&::-webkit-slider-thumb]:-mt-[10px] [&::-webkit-slider-thumb]:rounded-[2px] [&::-webkit-slider-thumb]:border [&::-webkit-slider-thumb]:border-[#707070] [&::-webkit-slider-thumb]:bg-[#e6e6e6]">
                    </div>
                </fieldset>
            </div>

            <div class="flex justify-end gap-[8px] pt-[8px]">
                <button class="w-[71px] h-[20px] leading-[17px] rounded-[3px] border-2 border-[#3fa9c9] bg-linear-to-b from-[#f0f6f8] to-[#cddde4]">确定</button>
                <button class="w-[71px] h-[20px] leading-[17px] rounded-[3px] border border-[#707070] bg-linear-to-b from-[#f4f4f4] to-[#cfcfcf]">取消</button>
                <button disabled class="w-[71px] h-[20px] leading-[17px] rounded-[3px] border border-[#b5b5b5] bg-[#f4f4f4] text-[#8c8c8c]">应用(<u>A</u>)</button>
                <button class="w-[71px] h-[20px] leading-[17px] rounded-[3px] border border-[#707070] bg-linear-to-b from-[#f4f4f4] to-[#cfcfcf]">帮助(<u>H</u>)</button>
            </div>
        </div>
        <div class="h-[6px] rounded-b-[5px] bg-linear-to-r from-[#cfe0f2] via-[#9db8da] to-[#c6daf0]"></div>
    </div>

    <!-- Seta de destaque -->
    <svg class="absolute left-[285px] top-[244px] w-[62px] h-[130px] pointer-events-none" viewBox="285 244 62 130">
        <path d="M340 247L326 263l5 2-41 106 2 1 46-103 4-1z" fill="#f31df0"/>
    </svg>

    <!-- Marca d'água -->
    <svg class="absolute right-[45px] bottom-[16px] w-[190px] h-[92px] pointer-events-none" viewBox="765 502 190 92">
        <g fill="#fff" fill-opacity=".75" stroke="#a8a8a8" stroke-opacity=".6" font-family="Lato, 'Noto Sans CJK SC', sans-serif">
            <ellipse cx="848" cy="514" rx="7" ry="9"/>
            <ellipse cx="865" cy="514" rx="7" ry="9"/>
            <ellipse cx="836" cy="525" rx="6" ry="8"/>
            <ellipse cx="875" cy="528" rx="6" ry="8"/>
            <path d="M856 526c7 0 10 8 15 13 8 8 6 20-4 21-8 0-14-1-23 0-10-1-12-13-4-20 6-5 8-14 16-14z"/>
            <text x="768" y="556" font-size="38" font-weight="900">Bai</text>
            <text x="841" y="555" font-size="24" font-weight="700" fill="#e4e4e4" stroke="#999">du</text>
            <text x="882" y="555" font-size="31" font-weight="700">经验</text>
            <text x="769" y="583" font-size="18" font-weight="700" font-family="Open Sans, sans-serif">jingyan.baidu.com</text>
        </g>
    </svg>

    <script>
        const icon = '<svg class="w-[15px] h-[15px] shrink-0"><use href="#dwg"/></svg>';

        // Destaca a tecla de atalho entre parênteses
        const mnemonic = key => key ? `(<u>${key}</u>)` : '';

        function checkRow(id, item, index) {
            const lead = item.icon === undefined ? '' : `<span class="w-[24px] shrink-0">${item.icon ? icon : ''}</span>`;
            return `
                <div class="h-[18px] flex items-center ${item.indent ? 'pl-[19px]' : ''}">
                    ${lead}
                    <input id="${id}-${index}" type="checkbox" ${item.on ? 'checked' : ''} class="appearance-none w-[13px] h-[13px] grid place-content-center border border-[#8e8f8f] bg-linear-to-br from-[#d3d7dc] to-[#f8f8f8] checked:before:content-[''] checked:before:w-[5px] checked:before:h-[9px] checked:before:-mt-[2px] checked:before:border-r-2 checked:before:border-b-2 checked:before:border-[#46558f] checked:before:rotate-45">
                    <label for="${id}-${index}" class="pl-[2px] whitespace-nowrap">${item.text}${mnemonic(item.key)}</label>
                </div>
            `;
        }

        const checks = {
            'window-elements': [
                { text: '图形窗口中显示滚动条', key: 'S' },
                { text: '显示屏幕菜单', key: 'U' },
                { text: '在工具栏中使用大按钮' },
                { text: '显示工具栏提示', on: true },
                { text: '在工具栏提示中显示快捷键', on: true },
            ],
            'layout-elements': [
                { text: '显示布局和模型选项卡', key: 'L', on: true },
                { text: '显示可打印区域', key: 'B', on: true },
                { text: '显示图纸背景', key: 'K', on: true },
                { text: '显示图纸阴影', key: 'E', on: true, indent: true },
                { text: '新建布局时显示页面设置管理器', key: 'G' },
                { text: '在新布局中创建视口', key: 'N', on: true },
            ],
            'performance': [
                { text: '带光栅图像/OLE 平移和缩放', key: 'P', icon: false },
                { text: '仅亮显光栅图像边框', key: 'R', on: true, icon: false },
                { text: '应用实体填充', key: 'Y', on: true, icon: true },
                { text: '仅显示文字边框', key: 'X', icon: true },
                { text: '绘制实体和曲面的真实轮廓', key: 'W', icon: true },
            ],
        };

        Object.keys(checks).forEach(id => {
            document.getElementById(id).innerHTML = checks[id].map((item, i) => checkRow(id, item, i)).join('');
        });

        const resolution = [
            { value: '10000', text: '圆弧和圆的平滑度', key: 'M' },
            { value: '8', text: '每条多段线曲线的线段数', key: 'V' },
            { value: '0.5', text: '渲染对象的平滑度', key: 'J' },
            { value: '4', text: '曲面轮廓素线', key: 'O' },
        ];

        document.getElementById('resolution').innerHTML = resolution.map((item, i) => `
            <div class="h-[26px] flex items-center">
                ${icon}
                <input id="res-${i}" type="text" value="${item.value}" class="w-[48px] h-[21px] ml-[8px] pl-[2px] border border-[#dadada] border-t-[#b4b4b4]">
                <label for="res-${i}" class="pl-[15px] whitespace-nowrap">${item.text}${mnemonic(item.key)}</label>
            </div>
        `).join('');
    </script>
</body>
</html>
